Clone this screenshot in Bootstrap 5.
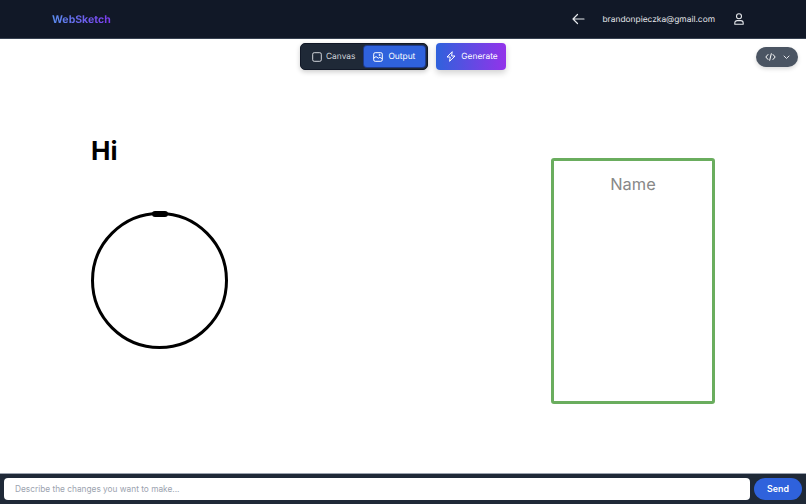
<!DOCTYPE html>
<html lang="en">

<head>
    <meta charset="UTF-8">
    <meta name="viewport" content="width=device-width, initial-scale=1">
    <title>WebSketch</title>
    <link href="https://cdn.jsdelivr.net/npm/bootstrap@5.3.0/dist/css/bootstrap.min.css" rel="stylesheet">
    <style>
        html, body { height: 100%; }
        body { font-family: Inter, "Liberation Sans", sans-serif; background: #fff; overflow: hidden; text-rendering: geometricPrecision; }
        .top-bar { height: 39px; background: #111827; border-bottom: 1px solid #374151; padding: 0 62px 0 52px; color: #e5e7eb; font-size: 8.4px; }
        .top-text { padding-top: 2px; }
        .brand { font-size: 10.5px; font-weight: 700; padding-top: 1px; background: linear-gradient(90deg, #5b8def, #7c3aed); -webkit-background-clip: text; background-clip: text; color: transparent; }
        .back-icon { margin-right: 17px; }
        .user-icon { margin-left: 19px; }
        .canvas-area { position: relative; flex: 1 1 auto; min-height: 0; }
        .tool-row { position: absolute; top: 4px; left: 300px; gap: 8px; }
        .toggle-group { height: 27px; padding: 2px; background: #1f2937; border: 1px solid #111827; border-radius: 5px; box-shadow: 0 2px 5px rgba(0, 0, 0, .2); }
        .toggle-btn { height: 100%; display: flex; align-items: center; gap: 4px; padding: 0 9px; border-radius: 3px; font-size: 8.4px; color: #d1d5db; }
        .toggle-btn.active { gap: 5px; padding-right: 10px; background: #2f62dc; color: #fff; box-shadow: 0 0 0 1px #1e3a8a; }
        .btn-label { padding-top: 2px; }
        .generate-btn { height: 27px; display: flex; align-items: center; gap: 5px; padding: 0 8px 0 10px; border-radius: 4px; font-size: 8.4px; color: #fff; background: linear-gradient(90deg, #2f62dc, #9333ea); box-shadow: 0 3px 6px rgba(0, 0, 0, .18); }
        .code-btn { position: absolute; top: 8px; left: 756px; width: 42px; height: 20px; background: #4b5563; border-radius: 10px; gap: 7px; box-shadow: 0 2px 4px rgba(0, 0, 0, .15); }
        .sketch-title { position: absolute; left: 91px; top: 95px; font-size: 26px; font-weight: 700; line-height: 36px; color: #000; }
        .sketch-circle { position: absolute; left: 91px; top: 173px; width: 137px; height: 137px; border: 3px solid #000; border-radius: 50%; }
        .sketch-handle { position: absolute; left: 152px; top: 172px; width: 16px; height: 6px; background: #000; border-radius: 3px; }
        .sketch-card { position: absolute; left: 551px; top: 119px; width: 164px; height: 246px; border: 3px solid #6aad5e; border-radius: 3px; padding-top: 11px; text-align: center; font-size: 16.4px; line-height: 24px; color: #888; }
        .chat-bar { height: 31px; background: #1f2937; border-top: 1px solid #9ca3af; padding: 4px; gap: 4px; }
        .chat-input { height: 22px; border-radius: 4px; border: 0; padding: 0 11px; font-size: 8.3px; }
        .chat-input::placeholder { color: #9ca3af; }
        .send-btn { width: 48px; height: 22px; padding: 0; border: 0; border-radius: 11px; background: #2f62dc; color: #fff; font-size: 8.8px; font-weight: 600; }
    </style>
</head>

<body>
    <div class="d-flex flex-column h-100">
        <!-- top bar -->
        <div class="top-bar d-flex align-items-center flex-shrink-0">
            <div class="brand">WebSketch</div>
            <svg class="back-icon ms-auto" width="13" height="12" viewBox="0 0 13 12" fill="none" stroke="#e5e7eb" stroke-width="1.2" stroke-linecap="round" stroke-linejoin="round"><path d="M12 6H1M5.5 1.5 1 6l4.5 4.5"/></svg>
            <span class="top-text">brandonpieczka@gmail.com</span>
            <svg class="user-icon" width="10" height="12" viewBox="0 0 10 12" fill="none" stroke="#e5e7eb" stroke-width="1.1" stroke-linejoin="round"><circle cx="5" cy="3.2" r="2.5"/><path d="M.8 11.3V10c0-1.5 1.1-2.4 2.4-2.4h3.6c1.3 0 2.4.9 2.4 2.4v1.3z"/></svg>
        </div>

        <div class="canvas-area">
            <div class="tool-row d-flex">
                <div class="toggle-group d-flex">
                    <div class="toggle-btn">
                        <svg width="10" height="10" viewBox="0 0 10 10" fill="none" stroke="#d1d5db" stroke-width="1"><rect x=".7" y=".7" width="8.6" height="8.6" rx="1.5"/></svg>
                        <span class="btn-label">Canvas</span>
                    </div>
                    <div class="toggle-btn active">
                        <svg width="10" height="10" viewBox="0 0 10 10" fill="none" stroke="#fff" stroke-width="1"><rect x=".7" y=".7" width="8.6" height="8.6" rx="1.5"/><path d="M.7 6.2 3 4.6l2.4 1.6 1.4-.9 2.5 1.5"/><circle cx="6.6" cy="3" r=".6"/></svg>
                        <span class="btn-label">Output</span>
                    </div>
                </div>
                <div class="generate-btn">
                    <svg width="10" height="11" viewBox="0 0 10 11" fill="none" stroke="#fff" stroke-width="1" stroke-linejoin="round"><path d="M6.2.7 1 6h3.2l-.6 4.3L9 5H5.6z"/></svg>
                    <span class="btn-label">Generate</span>
                </div>
            </div>

            <div class="code-btn d-flex align-items-center justify-content-center">
                <svg width="11" height="8" viewBox="0 0 11 8" fill="none" stroke="#fff" stroke-width="1" stroke-linecap="round" stroke-linejoin="round"><path d="M3 1.5.8 4 3 6.5M8 1.5 10.2 4 8 6.5M6.3.7 4.7 7.3"/></svg>
                <svg width="7" height="5" viewBox="0 0 7 5" fill="none" stroke="#e5e7eb" stroke-width="1" stroke-linecap="round" stroke-linejoin="round"><path d="M1 1l2.5 2.5L6 1"/></svg>
            </div>

            <!-- sketch output -->
            <div class="sketch-title">Hi</div>
            <div class="sketch-circle"></div>
            <div class="sketch-handle"></div>
            <div class="sketch-card">Name</div>
        </div>

        <!-- chat input -->
        <div class="chat-bar d-flex flex-shrink-0">
            <input type="text" class="form-control chat-input flex-grow-1" placeholder="Describe the changes you want to make...">
            <button type="button" class="btn send-btn flex-shrink-0">Send</button>
        </div>
    </div>

    <script src="https://cdn.jsdelivr.net/npm/bootstrap@5.3.0/dist/js/bootstrap.bundle.min.js"></script>
</body>

</html>
